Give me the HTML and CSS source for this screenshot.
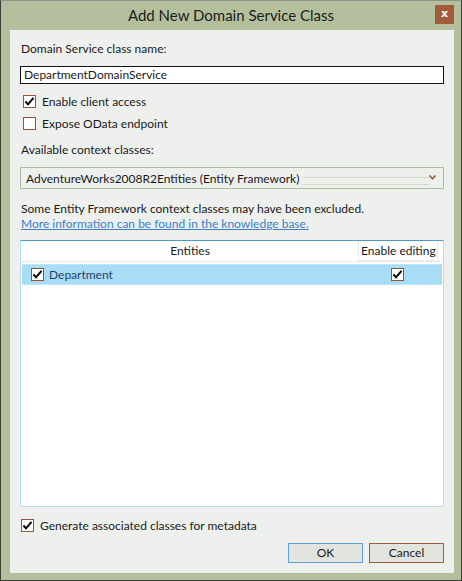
FILE: index.html
```html
<!DOCTYPE html>
<html>
<head>
<meta charset="utf-8">
<link rel="stylesheet" href="styles.css">
</head>
<body>
<div class="window">
  <div class="titlebar">
    <div class="title">Add New Domain Service Class</div>
    <div class="close">x</div>
  </div>
  <div class="panel">
    <div class="label l1">Domain Service class name:</div>
    <div class="textbox">DepartmentDomainService</div>
    <div class="check-row r1">
      <span class="cb"><svg viewBox="0 0 11 11" width="11" height="11"><path d="M1.5 5.5 L4 8.3 L9.5 1.8" fill="none" stroke="#000" stroke-width="2"/></svg></span>
      <span>Enable client access</span>
    </div>
    <div class="check-row r2">
      <span class="cb"></span>
      <span>Expose OData endpoint</span>
    </div>
    <div class="label l2">Available context classes:</div>
    <div class="combo">
      <span class="combo-text">AdventureWorks2008R2Entities (Entity Framework)</span>
      <span class="combo-focus"></span>
      <svg class="chev" viewBox="0 0 7 5" width="7" height="5"><path d="M0.5 0.5 L3.5 3.8 L6.5 0.5" fill="none" stroke="#8a4a2c" stroke-width="1.4"/></svg>
    </div>
    <div class="note">
      <div>Some Entity Framework context classes may have been excluded.</div>
      <a class="link">More information can be found in the knowledge base.</a>
    </div>
    <div class="listbox">
      <div class="list-head">
        <div class="col1">Entities</div>
        <div class="col2">Enable editing</div>
      </div>
      <div class="list-row">
        <div class="col1 cell">
          <span class="cb"><svg viewBox="0 0 11 11" width="11" height="11"><path d="M1.5 5.5 L4 8.3 L9.5 1.8" fill="none" stroke="#000" stroke-width="2"/></svg></span>
          <span class="dept">Department</span>
        </div>
        <div class="col2 cell2">
          <span class="cb"><svg viewBox="0 0 11 11" width="11" height="11"><path d="M1.5 5.5 L4 8.3 L9.5 1.8" fill="none" stroke="#000" stroke-width="2"/></svg></span>
        </div>
      </div>
    </div>
    <div class="check-row r3">
      <span class="cb"><svg viewBox="0 0 11 11" width="11" height="11"><path d="M1.5 5.5 L4 8.3 L9.5 1.8" fill="none" stroke="#000" stroke-width="2"/></svg></span>
      <span>Generate associated classes for metadata</span>
    </div>
    <div class="buttons">
      <div class="btn ok">OK</div>
      <div class="btn cancel">Cancel</div>
    </div>
  </div>
</div>
</body>
</html>
```
FILE: styles.css
```css
* { box-sizing: border-box; }
html, body { margin: 0; padding: 0; }
body {
  font-family: Lato, "Liberation Sans", sans-serif;
  font-size: 12px;
  color: #1a1a1a;
  background: #b4c09d;
}
.window {
  width: 462px;
  height: 581px;
  background: #b4c09d;
  border: 1px solid #3a3f36;
  border-top-color: #8c9484;
  display: flex;
  flex-direction: column;
}
.titlebar {
  height: 29px;
  position: relative;
  display: flex;
  align-items: center;
  justify-content: center;
}
.title {
  font-size: 15px;
  color: #1c1c1c;
  margin-top: -1px;
}
.close {
  position: absolute;
  right: 7px;
  top: 4px;
  width: 19px;
  height: 19px;
  background: #a25b3b;
  color: #fff;
  font-weight: bold;
  font-size: 11px;
  line-height: 17px;
  text-align: center;
  font-family: "DejaVu Sans", sans-serif;
}
.panel {
  flex: 1;
  margin: 0 7px 7px 9px;
  background: #eef0ee;
  padding: 0 10px;
  display: flex;
  flex-direction: column;
}
.label { height: 16px; line-height: 16px; padding-left: 1px; }
.l1 { margin-top: 11px; }
.textbox {
  margin-top: 9px;
  height: 18px;
  border: 1px solid #111;
  background: #fff;
  line-height: 16px;
  padding-left: 3px;
}
.check-row {
  display: flex;
  align-items: center;
  height: 17px;
  gap: 6px;
}
.cb {
  width: 13px;
  height: 13px;
  border: 1px solid #9a5234;
  background: #fff;
  display: inline-flex;
  align-items: center;
  justify-content: center;
  flex: none;
}
.r1 { margin-top: 9px; padding-left: 3px; }
.r2 { margin-top: 5px; padding-left: 3px; }
.l2 { margin-top: 10px; }
.combo {
  margin-top: 9px;
  height: 22px;
  border: 1px solid #b0bd9a;
  position: relative;
  display: flex;
  align-items: center;
  padding-left: 5px;
}
.combo-text { white-space: nowrap; }
.combo-focus {
  flex: 1;
  height: 8px;
  margin: 6px 14px 0 3px;
  border-top: 1px dotted #c0c6b4;
  border-bottom: 1px dotted #c0c6b4;
}
.chev { position: absolute; right: 7px; top: 7px; }
.note {
  margin-top: 12px;
  line-height: 15px;
  padding-left: 1px;
}
.link {
  color: #3a80c8;
  text-decoration: underline;
  display: block;
}
.listbox {
  margin-top: 9px;
  height: 267px;
  background: #fff;
  border: 1px solid #b6dcf0;
  border-top-color: #4e98d4;
  padding: 0 1px;
}
.list-head {
  display: flex;
  height: 21px;
  border-bottom: 1px dotted #d3d9de;
}
.list-head .col1 {
  flex: 1;
  text-align: center;
  line-height: 20px;
}
.list-head .col2 {
  width: 80px;
  margin-right: 4px;
  line-height: 20px;
  padding-left: 2px;
  border: 1px solid #e6ebef;
  border-top: none;
}
.list-row {
  margin-top: 2px;
  display: flex;
  height: 21px;
  background: #a9dcf5;
  border-top: 1px dotted #d6eefa;
  border-bottom: 1px dotted #d6eefa;
  align-items: center;
}
.cell {
  flex: 1;
  display: flex;
  align-items: center;
  gap: 5px;
  padding-left: 9px;
}
.dept { color: #243f6e; }
.cell2 {
  width: 84px;
  display: flex;
  padding-left: 33px;
}
.r3 { margin-top: 10px; padding-left: 1px; }
.buttons {
  margin-top: 9px;
  display: flex;
  justify-content: flex-end;
  gap: 6px;
}
.btn {
  width: 75px;
  height: 20px;
  line-height: 18px;
  text-align: center;
  background: #e2e5df;
  border: 1px solid #a25b3b;
}
.ok { border-color: #5a9fd8; }
```
